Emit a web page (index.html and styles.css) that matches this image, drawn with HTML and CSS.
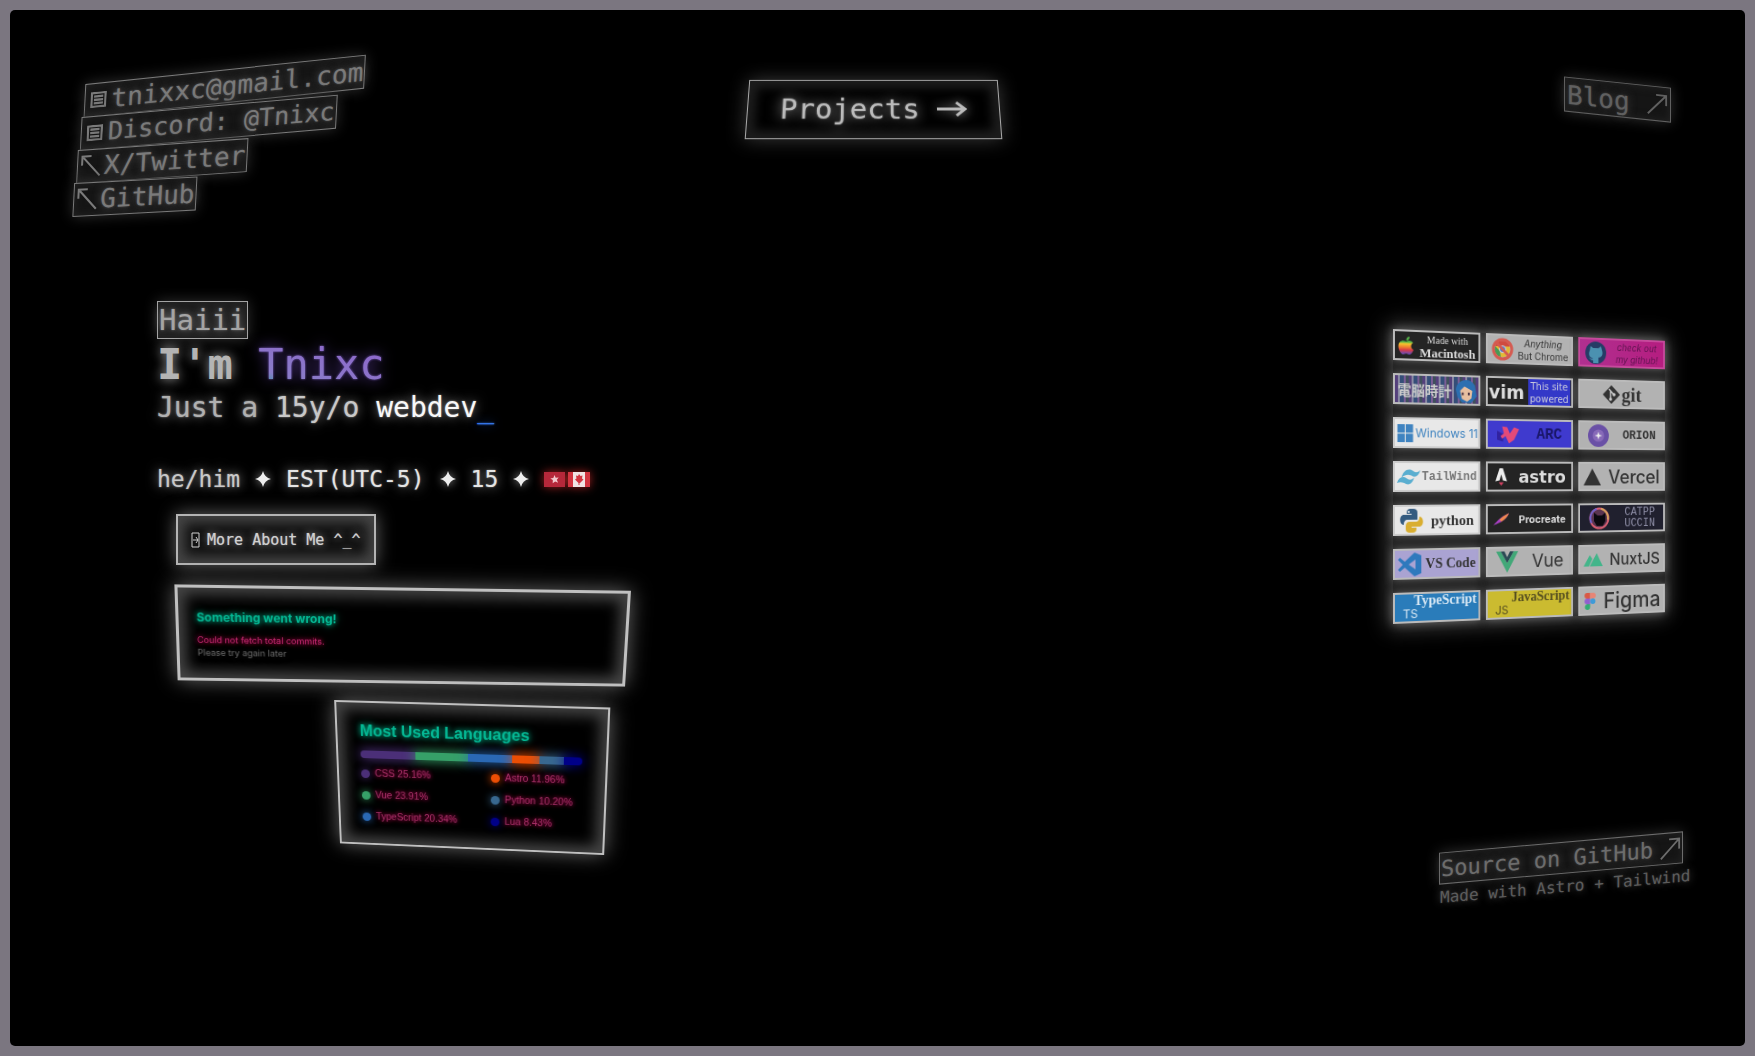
FILE: index.html
```html
<!DOCTYPE html>
<html lang="en">
<head>
<meta charset="utf-8">
<meta name="viewport" content="width=device-width, initial-scale=1">
<title>Tnixc</title>
<link rel="stylesheet" href="styles.css">
</head>
<body>
<div class="screen">
  <header class="top">
    <nav class="contacts" aria-label="Contact">
      <a class="boxed" href="mailto:tnixxc@gmail.com"><svg class="ico-note" viewBox="0 0 14 14"><path d="M1 1h12v12H1zM3 4h8M3 7h8M3 10h8"/></svg>tnixxc@gmail.com</a>
      <a class="boxed" href="#discord"><svg class="ico-note" viewBox="0 0 14 14"><path d="M1 1h12v12H1zM3 4h8M3 7h8M3 10h8"/></svg>Discord: @Tnixc</a>
      <a class="boxed tight" href="#x"><svg class="ico-arrow" viewBox="0 0 22 24"><path d="M2 11V2h9M2 2l18 20"/></svg>X/Twitter</a>
      <a class="boxed tight" href="#github"><svg class="ico-arrow" viewBox="0 0 22 24"><path d="M2 11V2h9M2 2l18 20"/></svg>GitHub</a>
    </nav>
    <a class="projects" href="#projects">Projects<svg viewBox="0 0 32 18"><path d="M1 9h29M21 2l9 7-9 7"/></svg></a>
    <a class="boxed blog" href="#blog">Blog<svg viewBox="0 0 24 26"><path d="M2 24L22 3M11 3h11v11"/></svg></a>
  </header>

  <main class="main">
    <section class="hero">
      <span class="boxed hi">Haiii</span>
      <h1><span class="im">I'm</span> <span class="name">Tnixc</span></h1>
      <p class="tagline"><span class="dim">Just a</span> <span class="mid">15y/o</span> <span class="lit">webdev</span><span class="caret">_</span></p>
      <p class="facts">
        <span class="mid">he/him</span>
        <svg class="star" viewBox="0 0 16 16"><path d="M8 0Q9.500 6.500 16 8Q9.500 9.500 8 16Q6.500 9.500 0 8Q6.500 6.500 8 0z"/></svg>
        <span>EST(UTC-5)</span>
        <svg class="star" viewBox="0 0 16 16"><path d="M8 0Q9.500 6.500 16 8Q9.500 9.500 8 16Q6.500 9.500 0 8Q6.500 6.500 8 0z"/></svg>
        <span>15</span>
        <svg class="star" viewBox="0 0 16 16"><path d="M8 0Q9.500 6.500 16 8Q9.500 9.500 8 16Q6.500 9.500 0 8Q6.500 6.500 8 0z"/></svg>
        <svg class="flags" viewBox="0 0 46 15"><path fill="#b5283a" d="M0 0h21v15H0z"/><path fill="#f2c8cc" d="M10.500 3l1.200 2.800 3-.2-1.900 2.200 1.300 3-2.900-1.400-2.500 1.800.1-3.100-2.500-1.500 3-.7z"/><path fill="#f1e4e4" d="M24 0h22v15H24z"/><path fill="#d23440" d="M24 0h5v15h-5zM41 0h5v15h-5zM35 2l1.500 2 2-.5-.5 3 1.500 1-3.500 3.500H35.500V13h-1v-2L31 7.500l1.500-1-.5-3 2 .5z"/></svg>
      </p>
      <button class="about" type="button"><svg viewBox="0 0 9 16"><path d="M1 1h7v14H1zM2 8h5M5 5l2 3-2 3"/></svg>More About Me ^_^</button>
      <article class="card error">
        <h2>Something went wrong!</h2>
        <p class="why">Could not fetch total commits.</p>
        <p class="retry">Please try again later</p>
      </article>
      <article class="card langs">
        <h2>Most Used Languages</h2>
        <div class="bar">
          <i class="css" style="width:25%"></i><i class="vue" style="width:24%"></i><i class="ts" style="width:20%"></i><i class="astro" style="width:12%"></i><i class="py" style="width:11%"></i><i class="lua" style="width:8%"></i>
        </div>
        <ul>
          <li><i class="css"></i>CSS 25.16%</li>
          <li><i class="vue"></i>Vue 23.91%</li>
          <li><i class="ts"></i>TypeScript 20.34%</li>
          <li><i class="astro"></i>Astro 11.96%</li>
          <li><i class="py"></i>Python 10.20%</li>
          <li><i class="lua"></i>Lua 8.43%</li>
        </ul>
      </article>
    </section>

    <aside class="side">
      <ul class="badges">
        <li class="dark serif two-line"><svg viewBox="0 0 16 18"><defs><linearGradient id="mac" x2="0" y2="1"><stop offset=".3" stop-color="#55b648"/><stop offset=".4" stop-color="#f5c62c"/><stop offset=".6" stop-color="#ee7b30"/><stop offset=".75" stop-color="#d83a48"/><stop offset=".95" stop-color="#6e4bb0"/></linearGradient></defs><path fill="url(#mac)" d="M8 5c3-2 6-.5 7 1-3 2-2.500 6 .5 7-1 3-3 5-4.500 5S9 17 8 17s-2 1-3.500 1S0 14 0 10c0-5 4-7 8-5zM8 4c0-2 1-4 3.500-4 0 2-1 4-3.500 4z"/></svg><span><small>Made with</small><b>Macintosh</b></span></li>
        <li class="grey two-line"><svg class="big" viewBox="0 0 24 24"><circle cx="12" cy="12" r="8" fill="#e3ba35"/><path fill="#cf4b40" d="M4 9a8.500 8.500 0 0 1 16 0h-8z"/><path fill="#479a55" d="M4 9l5 5 1 6a8 8 0 0 1-6-11z"/><circle cx="12" cy="12" r="3.500" fill="#4a7bd0" stroke="#ddd"/><circle cx="12" cy="12" r="10" fill="none" stroke="#d55a50" stroke-width="3"/><path stroke="#d55a50" stroke-width="3" d="M5 5l14 14"/></svg><span><small><em>Anything</em></small><small>But Chrome</small></span></li>
        <li class="pink two-line"><svg class="big" viewBox="0 0 24 24"><circle cx="12" cy="12" r="12" fill="#253c66"/><path fill="#4b91b0" d="M6 5l3 2h6l3-2 1 4c2 5-1 8-4 8v6H9v-3c-3 1-3-2-5-2 2-1 3 2 5 0-4 0-6-4-4-8z"/></svg><span><small><em>check out</em></small><small><em>my github!</em></small></span></li>
        <li class="glitch"><span><b>電脳時計</b></span><svg class="big" viewBox="0 0 24 26"><path fill="#2c6fb0" d="M0 12C1 0 16-3 22 7l2 12-6 7H7L2 20z"/><path fill="#e8bfa0" d="M5 13l5-5 9 5-1 8-5 4-6-3z"/><path stroke="#3c2638" stroke-width="2" d="M8 15v3M15 15v3"/></svg></li>
        <li class="dark vim"><b>vim</b><span><small>This site</small><small>powered</small></span></li>
        <li class="grey serif git"><svg viewBox="0 0 20 20"><path fill="#333" d="M10 0l10 10-10 10L0 10z"/><path stroke="#ccc" stroke-width="1.500" d="M7 4l6 6M9 6v9"/><circle cx="9" cy="15" r="1.800" fill="#ccc"/><circle cx="13" cy="10" r="1.800" fill="#ccc"/></svg><b>git</b></li>
        <li class="white win"><svg viewBox="0 0 16 18"><path fill="#3f83c0" d="M0 0h7.500v8.500H0zM8.500 0H16v8.500H8.500zM0 9.500h7.500V18H0zM8.500 9.500H16V18H8.500z"/></svg><span>Windows 11</span></li>
        <li class="blue mono arc"><svg class="big" viewBox="0 0 26 20"><path fill="#3122a0" d="M0 6l8 4-1 8-7-2z"/><path fill="#e34a79" d="M6 1l6 1 3 7 5-7 6 2-6 12-6 4-4-8-4 3-2-3 4-3z"/></svg><b>ARC</b></li>
        <li class="grey mono"><svg class="big" viewBox="0 0 22 22"><circle cx="11" cy="11" r="11" fill="#6a50a6"/><circle cx="11" cy="11" r="6" fill="#8769b8"/><path fill="#eee" d="M11 7l1 3 3 1-3 1-1 3-1-3-3-1 3-1z"/></svg><b>ORION</b></li>
        <li class="white mono tail"><svg viewBox="0 0 26 17"><path fill="#5aaed0" d="M5 9c2-7 7-11 13-7 3 2 5 2 8-1-2 7-6 9-10 6-4-2-7-1-11 2zM0 15c2-6 6-8 11-5 3 2 5 2 8-1-2 8-7 9-11 6-3-1-5-1-8 0z"/></svg><b>TailWind</b></li>
        <li class="dark wide"><svg viewBox="0 0 14 20"><path fill="#eee" d="M5 0h4l5 15-5-1-2-7-2 7-5 1z"/><path fill="#d44162" d="M4 16h6l-3 4z"/></svg><b>astro</b></li>
        <li class="grey vercel"><svg viewBox="0 0 20 18"><path fill="#333" d="M10 0l10 18H0z"/></svg><b>Vercel</b></li>
        <li class="white serif py-b"><svg class="big" viewBox="0 0 24 24"><path fill="#345b80" d="M12 0c6 0 6 2 6 5v6H8c-3 0-4 2-4 5-5 0-5-10 0-10h8V5H7c0-3 0-5 5-5z"/><path fill="#d9ae30" d="M12 24c-6 0-6-2-6-5 0-5 1-6 5-6h5c3 0 4-2 4-5 5 0 5 10 0 10h-8v1h5c0 3 0 5-5 5z"/><circle cx="9" cy="3" r="1" fill="#fff"/></svg><b>python</b></li>
        <li class="dark pro"><svg viewBox="0 0 18 14"><path fill="#a83fc4" d="M0 13C5 8 8 4 18 0c-3 7-9 10-18 13z"/><path fill="#f08a4a" d="M7 7c3-3 6-5 11-7-2 4-5 7-9 9z"/></svg><b>Procreate</b></li>
        <li class="navy mono two-line"><svg class="big" viewBox="0 0 24 24"><circle cx="12" cy="12" r="10.500" fill="#5a3450" stroke="#d85f72" stroke-width="2"/><path fill="none" stroke="#6a62d0" stroke-width="2" d="M3 17A10.500 10.500 0 0 1 9 2"/><path fill="none" stroke="#d8a45e" stroke-width="2" d="M14 1.700a10.500 10.500 0 0 1 8 12"/><path fill="#0b0910" d="M6 6l4 3h5l4-3v9l-3 5H9l-3-5z"/></svg><span><small>CATPP</small><small>UCCIN</small></span></li>
        <li class="lilac serif"><svg class="big" viewBox="0 0 24 24"><path fill="#2e79bd" d="M17 0l7 3v18l-7 3L7 15l-5 4-2-2 5-5-5-5 2-2 5 4zM18 7l-7 5 7 5z"/></svg><b>VS Code</b></li>
        <li class="grey vue-b"><svg class="big" viewBox="0 0 24 22"><path fill="#42a878" d="M0 0h5l7 12 7-12h5L12 22z"/><path fill="#2b4a55" d="M5 0h4l3 6 3-6h4l-7 12z"/></svg><span>Vue</span></li>
        <li class="grey nuxt"><svg viewBox="0 0 22 14"><path fill="#43b58a" d="M0 14L7 2l3 4-4 8zM7 14l8-14 7 14z"/></svg><b>NuxtJS</b></li>
        <li class="sky serif stack"><b>TypeScript</b><i>TS</i></li>
        <li class="yellow serif stack"><b>JavaScript</b><i>JS</i></li>
        <li class="grey figma"><svg viewBox="0 0 15 21"><path fill="#d95945" d="M3.500 0H7.500v7h-4a3.500 3.500 0 0 1 0-7z"/><path fill="#e88575" d="M7.500 0h4a3.500 3.500 0 0 1 0 7h-4z"/><path fill="#925fd0" d="M3.500 7h4v7h-4a3.500 3.500 0 0 1 0-7z"/><circle cx="11" cy="10.500" r="3.500" fill="#3e9bd8"/><path fill="#32ad74" d="M3.500 14h4v3.500a3.500 3.500 0 1 1-4-3.500z"/></svg><b>Figma</b></li>
      </ul>
      <footer class="source">
        <a class="boxed" href="#source">Source on GitHub<svg viewBox="0 0 24 26"><path d="M2 24L22 3M11 3h11v11"/></svg></a>
        <p>Made with Astro + Tailwind</p>
      </footer>
    </aside>
  </main>
</div>
</body>
</html>
```

FILE: styles.css
```css
* { box-sizing: border-box; }

body {
  margin: 0;
  padding: 10px;
  background: #7b7680;
  color: #e4e4e4;
  font-family: "DejaVu Sans Mono", monospace;
}

h1, h2, p, ul { margin: 0; padding: 0; font-weight: 400; }
ul { list-style: none; }
a { color: inherit; text-decoration: none; }

.screen {
  min-height: calc(100vh - 20px);
  padding: 68px 52px 48px;
  border-radius: 5px;
  background: #000;
  overflow: hidden;
}

/* outlined, glowing text boxes */
.boxed {
  display: flex;
  align-items: center;
  border: 1px solid currentColor;
  background: #151515;
  box-shadow: 0 0 14px #303030, inset 0 0 8px #242424;
  text-shadow: 0 0 2px #555, 0 0 8px #666;
  white-space: nowrap;
}
.boxed svg, .projects svg, .about svg {
  flex: none;
  fill: none;
  stroke: currentColor;
}

.top {
  display: grid;
  grid-template-columns: 1fr auto 1fr;
  align-items: start;
  padding: 0 22px 0 14px;
}

.contacts {
  display: flex;
  flex-direction: column;
  align-items: flex-start;
  padding-top: 6px;
  color: #7a7a7a;
  font-size: 26px;
  line-height: 32px;
  transform: skewX(-3deg);
}
.contacts .boxed {
  gap: 5px;
  padding: 0 1px 0 5px;
  transform-origin: left center;
}
.contacts .boxed + .boxed { margin-top: -1px; }
.contacts .tight { gap: 2px; padding-left: 2px; }
.contacts .boxed:nth-child(1) { margin-left: 6px; transform: skewY(-6deg); }
.contacts .boxed:nth-child(2) { margin-left: 4px; font-size: 25px; transform: skewY(-5deg); }
.contacts .boxed:nth-child(3) { margin-left: 2px; transform: skewY(-4deg); }
.contacts .boxed:nth-child(4) { transform: skewY(-3deg); }
.ico-note { width: 16px; height: 16px; stroke-width: 2; }
.ico-arrow { width: 22px; height: 24px; stroke-width: 2; }

.projects {
  display: flex;
  align-items: center;
  gap: 16px;
  height: 62px;
  padding: 0 32px;
  border: 1px solid #aaa;
  color: #bbb;
  font-size: 29px;
  text-shadow: 0 0 2px #888, 0 0 14px #bbb;
  box-shadow: 0 0 20px #3a3a3a, inset 0 0 10px 8px #1c1c1c;
  transform: perspective(500px) rotateX(17deg);
}
.projects svg { width: 31px; height: 18px; stroke-width: 3; filter: drop-shadow(0 0 6px #999); }

.blog {
  justify-self: end;
  gap: 16px;
  height: 35px;
  margin-top: 4px;
  padding: 0 2px;
  color: #606060;
  font-size: 26px;
  transform: skewY(6deg);
  text-shadow: 0 0 2px #444, 0 0 8px #444;
}
.blog svg, .source svg { width: 22px; height: 24px; stroke-width: 2; }

.main {
  display: flex;
  justify-content: space-between;
  padding-left: 95px;
  padding-top: 84px;
}

.hero {
  display: flex;
  flex-direction: column;
  align-items: flex-start;
  width: 480px;
}
.hi {
  height: 38px;
  padding: 0 1px;
  color: #a4a4a4;
  font-size: 29px;
  background: #1c1c1c;
  text-shadow: 0 0 2px #777, 0 0 8px #888;
}
h1 { font-size: 42px; line-height: 52px; white-space: nowrap; }
.im { color: #b4b4b4; font-weight: 700; text-shadow: 0 0 12px #aaa; }
.name {
  background: linear-gradient(15deg, #2c9c9a 4%, #8a7cc8 24%, #8f62cc 100%);
  -webkit-background-clip: text;
  background-clip: text;
  color: transparent;
  filter: drop-shadow(0 0 1px #7a5cc0) drop-shadow(0 0 7px #51368a);
}
.tagline { font-size: 28px; line-height: 34px; text-shadow: 0 0 2px #999, 0 0 12px #999; white-space: nowrap; }
.dim { color: #b0b0b0; }
.mid { color: #c8c8c8; }
.lit { color: #f8f8f8; }
.caret { color: #3474e6; text-shadow: 0 0 2px #3474e6, 0 0 10px #1a49aa; }

.facts {
  display: flex;
  align-items: center;
  gap: 15px;
  margin-top: 38px;
  font-size: 23px;
  line-height: 32px;
  text-shadow: 0 0 2px #888, 0 0 12px #aaa;
  white-space: nowrap;
}
.star { width: 16px; height: 16px; fill: #eee; filter: drop-shadow(0 0 5px #999); }
.flags { width: 46px; height: 15px; filter: drop-shadow(0 0 5px #a02020); }

.about {
  display: flex;
  align-items: center;
  gap: 7px;
  height: 51px;
  margin: 19px 0 0 19px;
  padding: 0 13px;
  border: 2px solid #b4b4b4;
  background: #111;
  color: #d0d0d0;
  font: 15px "DejaVu Sans Mono", monospace;
  text-shadow: 0 0 1px #999, 0 0 8px #aaa;
  box-shadow: 0 0 18px #666, inset 0 0 12px 7px #444;
}
.about svg { width: 9px; height: 16px; }

.card {
  border: 3px solid #c0c0c0;
  background: #000;
  box-shadow: 0 0 20px #666, inset 0 0 14px 7px #444;
}
.card h2 { color: #04b894; font-weight: 700; text-shadow: 0 0 8px #008f70, 0 0 5px #008f70; }

.error {
  width: 452px;
  height: 98px;
  margin: 22px 0 0 19px;
  padding: 22px 18px;
  font: 700 9px/13px Inter, sans-serif;
  transform: rotate(.8deg) perspective(1000px) rotateX(-12deg);
}
.error h2 { font-size: 12px; line-height: 16px; }
.why { margin-top: 8px; color: #c42a70; text-shadow: 0 0 6px #a0004a, 0 0 4px #a0004a; }
.retry { color: #6c6c6c; text-shadow: 0 0 8px #333; }

.langs {
  align-self: flex-end;
  width: 272px;
  height: 152px;
  margin: 17px 31px 0 0;
  padding: 17px 23px;
  border-width: 2px;
  font: 10px/14px "Liberation Sans", sans-serif;
  transform: perspective(1000px) rotateX(-17deg) rotateY(-7deg);
}
.langs h2 { font-size: 16px; line-height: 24px; white-space: nowrap; }
.bar { display: flex; height: 8px; margin: 8px 0 9px; }
.bar i { box-shadow: 0 0 12px 1px var(--c); }
.bar i:first-child { border-radius: 4px 0 0 4px; }
.bar i:last-child { border-radius: 0 4px 4px 0; }
.langs i { background: var(--c); }
.langs ul {
  display: grid;
  grid-template-columns: 1fr 90px;
  grid-template-rows: repeat(3, 14px);
  grid-auto-flow: column;
  row-gap: 9px;
}
.langs li { display: flex; align-items: center; gap: 5px; color: #a83068; text-shadow: 0 0 5px #8c0040, 0 0 4px #8c0040; white-space: nowrap; }
.langs li i { width: 9px; height: 9px; border-radius: 50%; box-shadow: 0 0 8px var(--c); }
.css { --c: #4b2f78; }
.vue { --c: #36a068; }
.ts { --c: #2a68b4; }
.astro { --c: #ec4e04; }
.py { --c: #38688f; }
.lua { --c: #000088; }

.side {
  display: flex;
  flex-direction: column;
  width: 300px;
  padding-top: 28px;
}
.badges {
  display: grid;
  grid-template-columns: 91px 96px 101px;
  grid-auto-rows: 31px;
  gap: 13px 6px;
  background: #202020;
  box-shadow: 0 0 20px 4px #484848;
  transform-origin: left center;
  transform: perspective(600px) rotateY(10deg);
}
.badges li {
  display: flex;
  align-items: center;
  justify-content: space-around;
  gap: 2px;
  padding: 0 2px;
  border: 2px solid #bbb;
  overflow: hidden;
  color: #333;
  font: 14px/14px Inter, sans-serif;
  white-space: nowrap;
  box-shadow: 0 0 10px #666;
}
.badges svg { flex: none; width: 17px; height: 18px; }
.badges .big { width: 24px; height: 24px; }
.badges small, .badges .two-line b { display: block; font-size: 10px; line-height: 13px; text-align: center; }
.badges .serif { font-family: "Liberation Serif", serif; }
.badges .mono { font-family: "Liberation Mono", monospace; font-size: 13px; }
.badges .dark { background: #242424; color: #ddd; }
.badges .dark.two-line b { font-size: 13px; }
.badges .grey { background: #b2b2b2; }
.badges .white { background: #e8e8e8; border-color: #ccc; }
.badges .pink { background: linear-gradient(90deg, #b03090, #b51d80); border-color: #c64a9c; color: #601450; }
.badges .blue { background: #3f3ace; color: #191668; }
.badges .navy { background: #20202e; color: #8c8ca4; }
.badges .navy small { font-size: 12px; line-height: 12px; }
.badges .lilac { background: #aaa3d2; }
.badges .sky { background: #2a7cba; color: #d8e8f4; }
.badges .yellow { background: #cbbb30; color: #554e20; }
.badges .glitch {
  padding-right: 0;
  background: repeating-linear-gradient(90deg, #55407c 0 3px, #8a8aa4 3px 5px, #354e78 5px 9px, #7a5d96 9px 11px, #40505c 11px 14px);
  color: #ccc;
  font-family: "Noto Sans CJK JP", sans-serif;
}
.badges .vim { padding: 0; font: 19px/20px "DejaVu Sans", sans-serif; }
.badges .vim span { flex: none; padding: 1px 2px; background: #3338c8; color: #ccd; }
.badges .git { justify-content: center; font-size: 21px; }
.badges .git svg { width: 20px; height: 20px; }
.badges .arc, .badges .orion { font-size: 16px; }
.badges .win { color: #3d82bf; font-size: 12px; }
.badges .tail { gap: 0; padding: 0 1px; color: #777; font-size: 12px; }
.badges .tail svg { width: 24px; }
.badges .wide { font: 18px/18px "DejaVu Sans", sans-serif; }
.badges .vercel, .badges .nuxt, .badges .figma { padding: 0 1px; }
.badges .vercel b, .badges .nuxt b, .badges .figma b { font-weight: 500; }
.badges .vercel { font-size: 20px; }
.badges .vercel svg { width: 20px; }
.badges .py-b { font-size: 15px; }
.badges .pro { font-size: 11px; }
.badges .vue-b { font-size: 19px; }
.badges .nuxt { font-size: 17px; }
.badges .nuxt svg { width: 22px; }
.badges .figma { font-size: 23px; line-height: 24px; }
.badges .stack { display: grid; grid-template-rows: 14px 12px; gap: 0; justify-content: stretch; padding: 0 2px; }
.badges .stack b { text-align: right; font-size: 14px; line-height: 14px; }
.badges .stack i { padding-left: 6px; font: 12px/12px Inter, sans-serif; }

.source {
  display: flex;
  flex-direction: column;
  align-items: flex-start;
  margin: 218px 0 0 46px;
  color: #6c6c6c;
}
.source .boxed {
  gap: 6px;
  height: 32px;
  padding: 0 1px;
  font-size: 22px;
  transform: skewY(-5deg);
  text-shadow: 0 0 2px #444, 0 0 8px #555;
}
.source p {
  padding-left: 1px;
  font-size: 16px;
  line-height: 26px;
  color: #5c5c5c;
  text-shadow: 0 0 2px #333, 0 0 8px #555;
  white-space: nowrap;
  transform: skewY(-5deg);
}
```
